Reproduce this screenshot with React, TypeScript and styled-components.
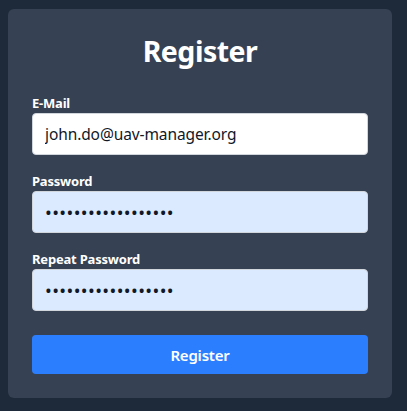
import React from "react";
import styled, { createGlobalStyle } from "styled-components";

const Global = createGlobalStyle`
  html, body {
    margin: 0;
    padding: 0;
    background: #1e2939;
    font-family: "Noto Sans", "Segoe UI", Arial, sans-serif;
  }
  * { box-sizing: border-box; }
`;

const Page = styled.div`
  min-height: 411px;
  padding: 9px 15px 13px 8px;
`;

const Card = styled.form`
  width: 384px;
  height: 389px;
  background: #364153;
  border-radius: 6px;
  padding: 24px;
  display: flex;
  flex-direction: column;
`;

const Title = styled.h1`
  margin: 0 0 24px;
  text-align: center;
  color: #ffffff;
  font-size: 28.5px;
  line-height: 36px;
  font-weight: 700;
  letter-spacing: -0.5px;
`;

const Field = styled.div`
  display: flex;
  flex-direction: column;
  margin-bottom: 16px;
`;

const Label = styled.label`
  color: #ffffff;
  font-size: 13px;
  line-height: 20px;
  font-weight: 700;
  letter-spacing: -0.2px;
`;

const Input = styled.input<{ $filled?: boolean }>`
  width: 100%;
  height: 42px;
  padding: 8px 12px;
  border: 1px solid #d1d5dc;
  border-radius: 4px;
  background: ${(p) => (p.$filled ? "#dbeafe" : "#ffffff")};
  color: #101828;
  font-family: inherit;
  font-size: ${(p) => (p.$filled ? "18px" : "15.5px")};
  line-height: 24px;
  outline: none;
  letter-spacing: ${(p) => (p.$filled ? "0.4px" : "-0.1px")};
`;

const Button = styled.button`
  margin-top: 8px;
  height: 40px;
  width: 100%;
  border: none;
  border-radius: 4px;
  background: #2b7fff;
  color: #ffffff;
  font-family: inherit;
  font-size: 15px;
  line-height: 24px;
  font-weight: 600;
  letter-spacing: -0.2px;
  cursor: pointer;
`;

const pw = "abcdefghijklmnopqr";

export default function App() {
  return (
    <>
      <Global />
      <Page>
        <Card onSubmit={(e) => e.preventDefault()}>
          <Title>Register</Title>
          <Field>
            <Label htmlFor="email">E-Mail</Label>
            <Input id="email" type="email" defaultValue="john.do@uav-manager.org" />
          </Field>
          <Field>
            <Label htmlFor="pw">Password</Label>
            <Input id="pw" type="password" defaultValue={pw} $filled />
          </Field>
          <Field>
            <Label htmlFor="pw2">Repeat Password</Label>
            <Input id="pw2" type="password" defaultValue={pw} $filled />
          </Field>
          <Button type="submit">Register</Button>
        </Card>
      </Page>
    </>
  );
}
